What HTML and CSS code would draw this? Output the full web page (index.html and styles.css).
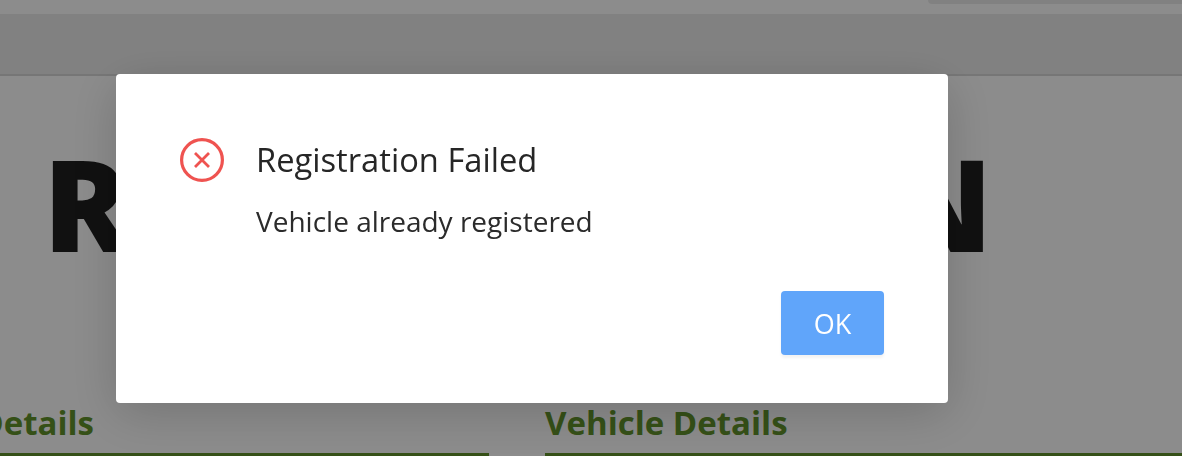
FILE: index.html
```html
<!DOCTYPE html>
<html lang="en">
<head>
    <meta charset="UTF-8">
    <title>Registration</title>
    <link rel="stylesheet" href="styles.css">
</head>
<body>

<div class="top-strip"><div class="account-menu"></div></div>
<div class="nav-bar"></div>

<div class="hero">
    <h1>REGISTRATION</h1>
</div>

<div class="columns">
    <div class="column column-left"><h2>Owner Details</h2></div>
    <div class="column column-right"><h2>Vehicle Details</h2></div>
</div>

<div class="overlay"></div>

<div class="dialog">
    <div class="dialog-body">
        <svg class="dialog-icon" viewBox="0 0 44 44" fill="none" stroke="#ef5350">
            <circle cx="22" cy="22" r="20.4" stroke-width="3.2"/>
            <path d="M15 15 L29 29 M29 15 L15 29" stroke-width="2.8"/>
        </svg>
        <div class="dialog-text">
            <div class="dialog-title">Registration Failed</div>
            <div class="dialog-message">Vehicle already registered</div>
        </div>
    </div>
    <div class="dialog-buttons">
        <button class="ok-btn">OK</button>
    </div>
</div>

</body>
</html>
```

FILE: styles.css
```css
html, body {
    height: 456px;
    overflow: hidden;
}
body {
    margin: 0;
    font-family: "Open Sans", sans-serif;
    background-color: #ffffff;
}
.top-strip {
    height: 14px;
    background-color: #ffffff;
}
.account-menu {
    width: 254px;
    height: 4px;
    margin-left: auto;
    background-color: #ececec;
    border-bottom-left-radius: 4px;
}
.nav-bar {
    height: 60px;
    background-color: #ececec;
    border-bottom: 2px solid #d8d8d8;
}
.hero {
    height: 319px;
    overflow: hidden;
}
.hero h1 {
    margin: 37px 0 0 43px;
    font-size: 128px;
    line-height: 180px;
    font-weight: 800;
    letter-spacing: -0.4px;
    color: #1f1f1f;
    white-space: nowrap;
}
.columns {
    display: flex;
    gap: 56px;
    margin-left: -140px;
}
.column {
    height: 61px;
    border-bottom: 3px solid #62932b;
    box-sizing: border-box;
}
.column-left {
    width: 629px;
}
.column-right {
    flex: 1;
}
.column h2 {
    margin: 0;
    font-size: 33px;
    line-height: 56px;
    font-weight: 700;
    color: #62932b;
    white-space: nowrap;
}
.overlay {
    position: fixed;
    inset: 0;
    background-color: rgba(0, 0, 0, 0.45);
}
.dialog {
    position: fixed;
    left: 116px;
    top: 74px;
    width: 832px;
    height: 329px;
    box-sizing: border-box;
    padding: 64px 64px 48px;
    background-color: #fff;
    border-radius: 4px;
    box-shadow: 0 10px 50px rgba(0, 0, 0, 0.18);
    display: flex;
    flex-direction: column;
    justify-content: space-between;
}
.dialog-body {
    display: flex;
    gap: 32px;
}
.dialog-icon {
    width: 44px;
    height: 44px;
    flex-shrink: 0;
}
.dialog-title {
    font-size: 32.7px;
    line-height: 44px;
    font-weight: 400;
    color: #262626;
}
.dialog-message {
    margin-top: 25px;
    font-size: 28px;
    line-height: 28px;
    color: #2b2b2b;
}
.dialog-buttons {
    display: flex;
    justify-content: flex-end;
}
.ok-btn {
    width: 103px;
    height: 64px;
    border: none;
    border-radius: 4px;
    background-color: #60a5fa;
    box-shadow: 0 3px 3px rgba(0, 0, 0, 0.05);
    color: #fff;
    font-family: "Open Sans", sans-serif;
    font-size: 27px;
    font-weight: 400;
}
```
